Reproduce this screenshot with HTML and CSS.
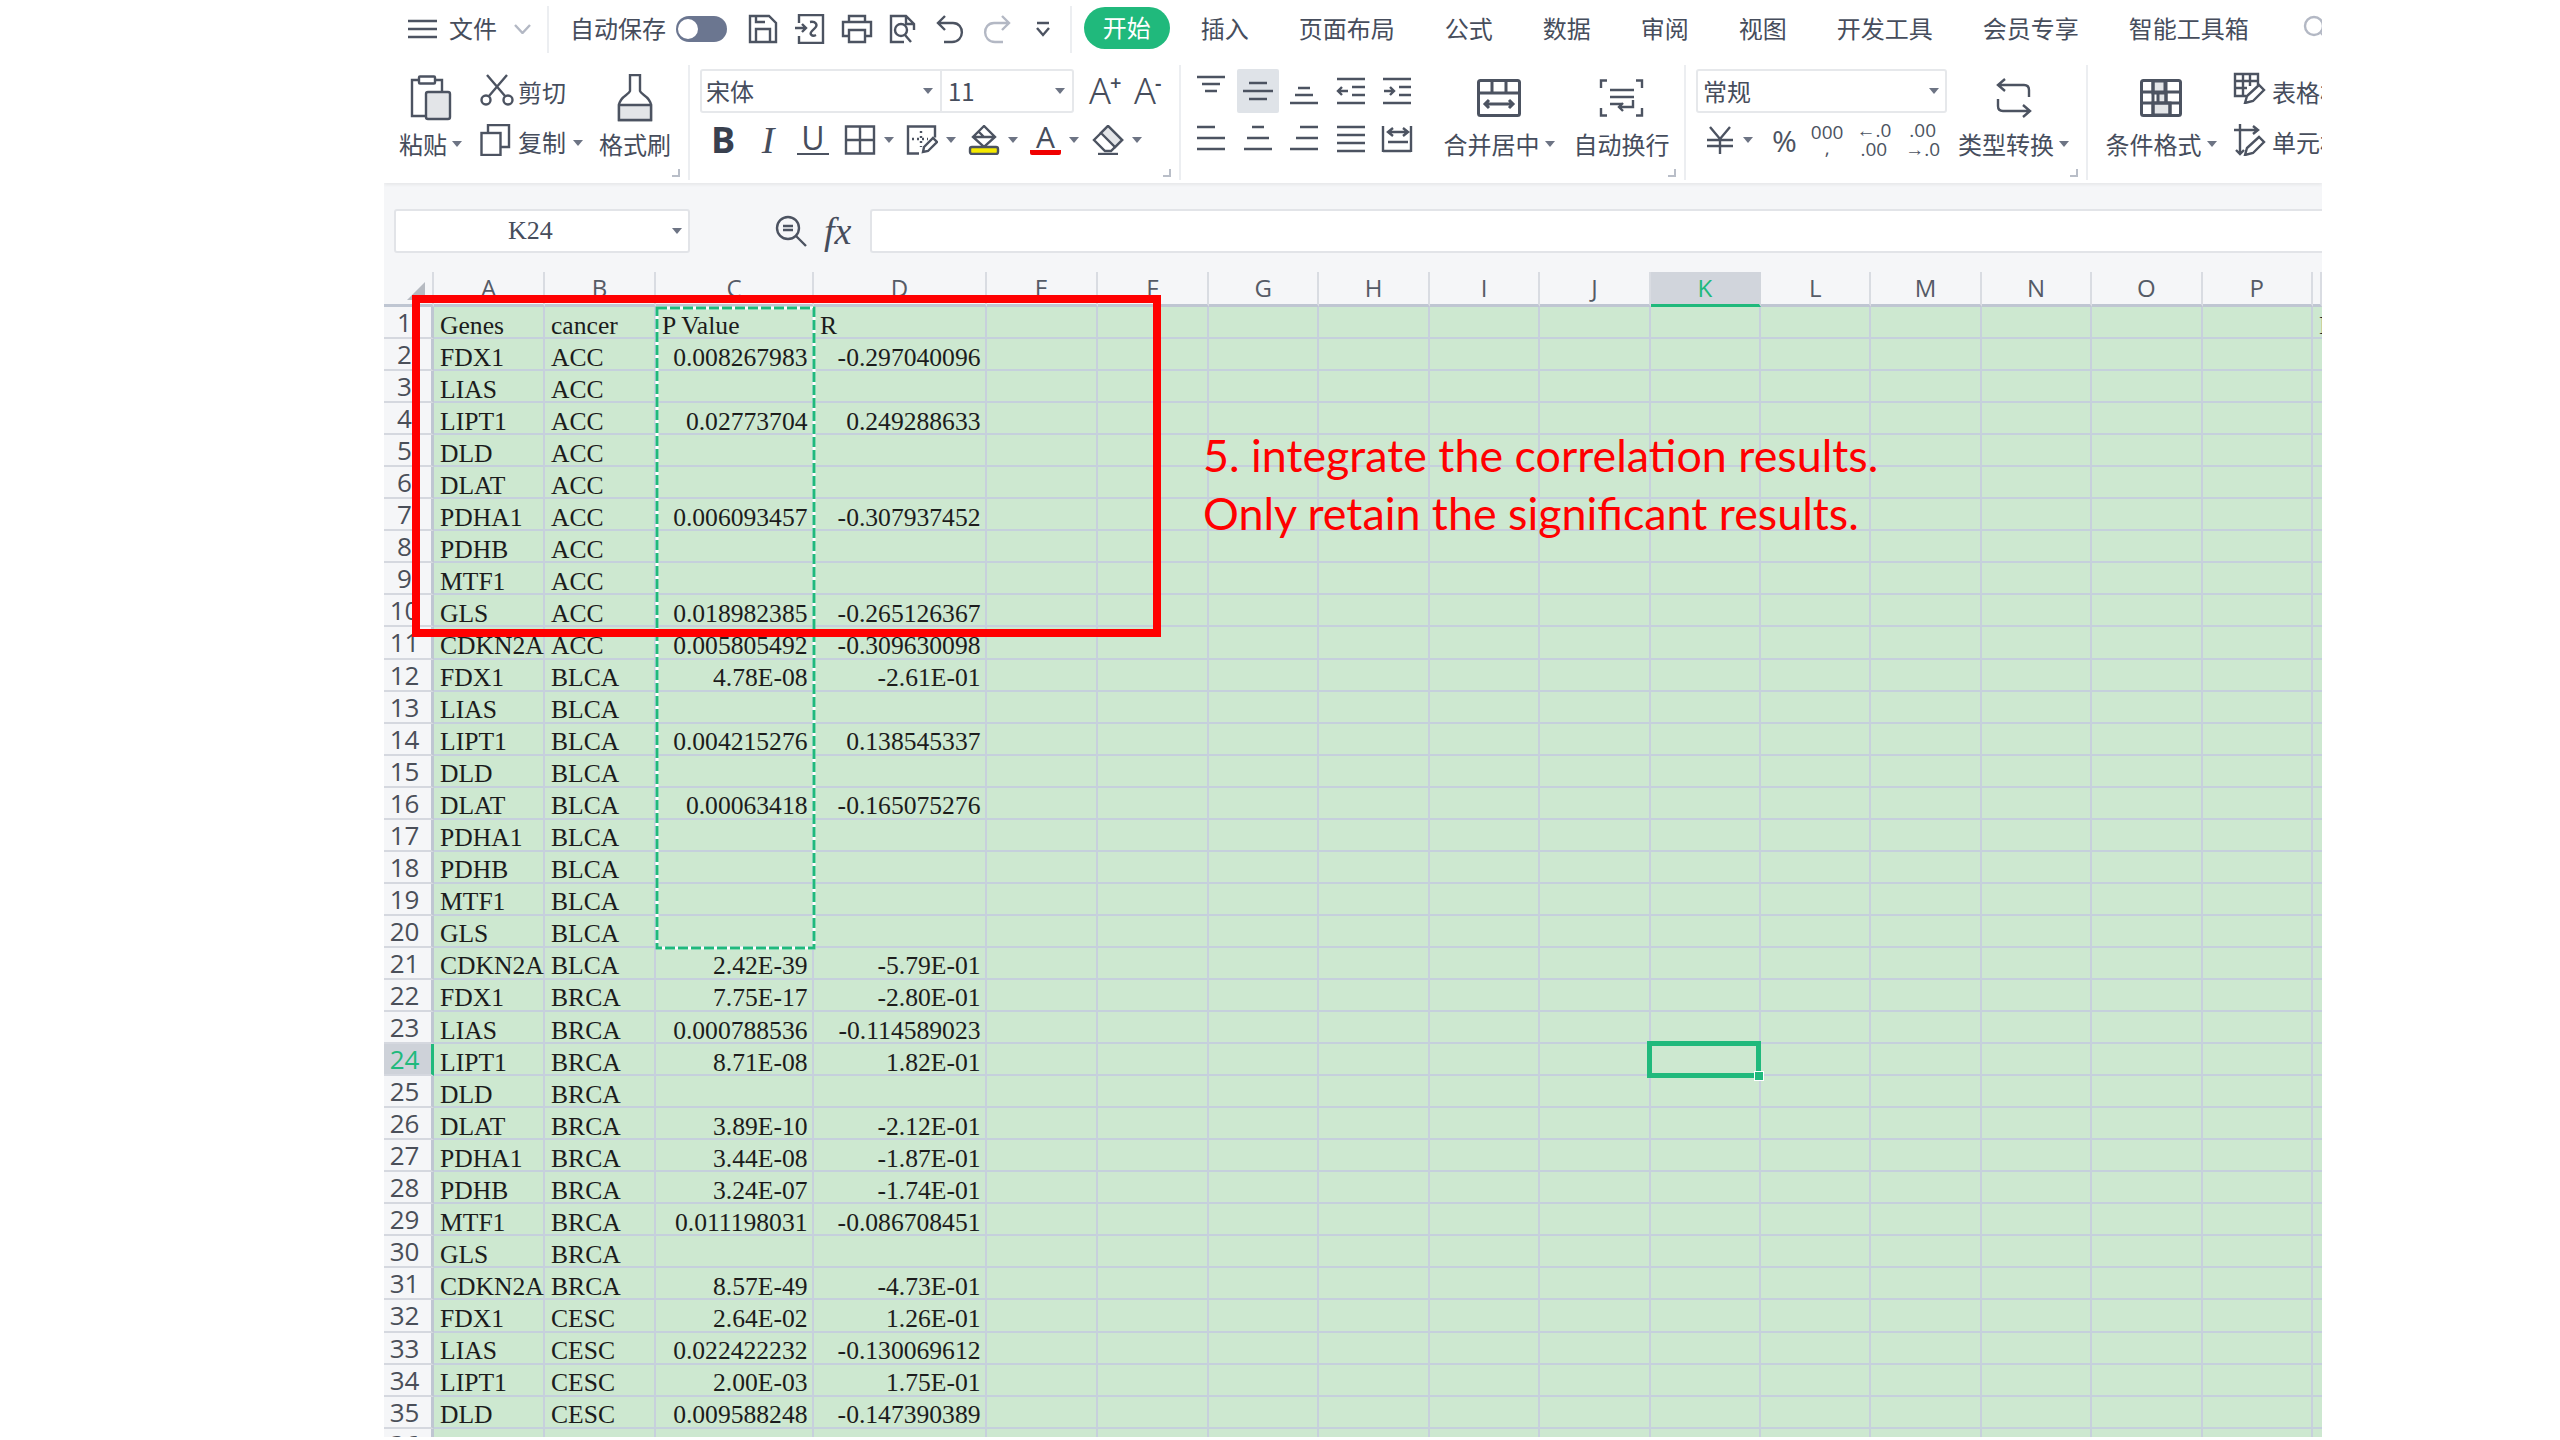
FILE: index.html
```html
<!DOCTYPE html>
<html lang="zh-CN">

<head>
    <meta charset="UTF-8">
    <title>WPS Spreadsheet</title>
    <link rel="stylesheet" href="styles.css">
</head>

<body>
    <div class="screen">
        <!-- title tabs -->
        <div class="tabs">
            <svg class="ic menu-ic" width="29" height="20" viewBox="0 0 29 20"><path d="M0 2h29M0 10h29M0 18h29"/></svg>
            <span class="tab-file">文件</span>
            <svg class="ic-light chev" width="17" height="10" viewBox="0 0 17 10"><path d="M1 1l7.500 8L16 1"/></svg>
            <i class="tab-sep sep-first"></i>
            <span class="autosave">自动保存</span>
            <span class="toggle"><b></b></span>
            <div class="quick">
                <svg class="ic" width="32" height="30" viewBox="0 0 32 30"><path d="M3 2h19l7 7v19H3zM9 28V15h14v13M9 2v6h9"/></svg>
                <svg class="ic" width="30" height="30" viewBox="0 0 30 30"><path d="M4 9V1h24v28H4v-7M0 14h11M7 10l4 4-4 4M15 8c6-1 8 3 5 6l-3 3c-3 3 0 6 4 4"/></svg>
                <svg class="ic" width="32" height="30" viewBox="0 0 32 30"><path d="M8 8V2h16v6M7 22H2V8h28v14h-5M8 16h16v12H8z"/></svg>
                <svg class="ic" width="30" height="30" viewBox="0 0 30 30"><path d="M16 28H3V2h15l8 8v6M18 2v8h8"/><circle cx="13" cy="16" r="6"/><path d="M17 21l6 7"/></svg>
                <svg class="ic" width="28" height="30" viewBox="0 0 28 30"><path d="M9 2L2 9l7 7M2 9h15c12 0 12 19-1 19H8"/></svg>
                <svg class="ic-light" width="28" height="30" viewBox="0 0 28 30"><path d="M19 2l7 7-7 7M26 9H11C-1 9-1 28 12 28h8"/></svg>
                <svg class="ic" width="16" height="16" viewBox="0 0 16 16"><path d="M2 2h12M2 7l6 7 6-7"/></svg>
            </div>
            <i class="tab-sep"></i>
            <span class="tab-active">开始</span>
            <div class="tab-list">
                <span>插入</span>
                <span>页面布局</span>
                <span>公式</span>
                <span>数据</span>
                <span>审阅</span>
                <span>视图</span>
                <span>开发工具</span>
                <span>会员专享</span>
                <span>智能工具箱</span>
            </div>
            <svg class="ic-light search" width="26" height="26" viewBox="0 0 26 26"><circle cx="11" cy="11" r="9"/><path d="M18 18l7 7"/></svg>
        </div>

        <!-- ribbon -->
        <div class="ribbon">
            <div class="group group-clip">
                <div class="big big-paste">
                    <div class="big-icon">
                        <svg class="ic" width="42" height="46" viewBox="0 0 42 46"><path d="M9 5H2v36h14M25 5h7v11"/><rect x="9" y="1.500" width="16" height="7" rx="1"/><rect x="16" y="17" width="24" height="27" rx="2" class="shade"/></svg>
                    </div>
                    <div class="big-label">粘贴<i class="arrow"></i></div>
                </div>
                <div class="stack stack-clip">
                    <div class="stack-row">
                        <svg class="ic row-ic" width="38" height="32" viewBox="0 0 38 32"><circle cx="6" cy="26" r="4.500"/><circle cx="28" cy="26" r="4.500"/><path d="M9 22L27 1M25 22L7 1"/></svg>
                        <span>剪切</span>
                    </div>
                    <div class="stack-row">
                        <svg class="ic row-ic" width="38" height="32" viewBox="0 0 38 32"><path d="M8 9V1h21v22h-8"/><rect x="1.500" y="9" width="19" height="22"/></svg>
                        <span>复制</span><i class="arrow"></i>
                    </div>
                </div>
                <div class="big big-brush">
                    <div class="big-icon">
                        <svg class="ic" width="36" height="48" viewBox="0 0 36 48"><path d="M13 1h10v16c1 4 10 5 11 14v15H2V31c1-9 10-10 11-14z"/><path d="M2 31h32v15H2z" class="shade"/></svg>
                    </div>
                    <div class="big-label">格式刷</div>
                </div>
                <i class="corner"></i>
            </div>

            <div class="group group-font">
                <div class="font-rows">
                    <div class="font-top">
                        <div class="combo combo-font">
                            <div class="combo-part part-name"><span>宋体</span><i class="arrow"></i></div>
                            <div class="combo-part part-size"><span>11</span><i class="arrow"></i></div>
                        </div>
                        <span class="size-btn size-up">A<sup>+</sup></span>
                        <span class="size-btn">A<sup>-</sup></span>
                    </div>
                    <div class="font-bottom">
                        <span class="fmt fmt-b">B</span>
                        <span class="fmt fmt-i">I</span>
                        <span class="fmt fmt-u">U</span>
                        <div class="drop drop-first">
                            <svg class="ic" width="32" height="30" viewBox="0 0 32 30"><path d="M2 1.500h28v27H2zM16 1.500v27M2 15h28"/></svg><i class="arrow"></i>
                        </div>
                        <div class="drop">
                            <svg class="ic" width="32" height="30" viewBox="0 0 32 30"><path d="M13 28.500H2v-27h27v11"/><path d="M15 6v16M6 14h16" stroke-dasharray="2 3"/><path d="M17 27l1-5 9-9 4 4-9 9z"/></svg><i class="arrow"></i>
                        </div>
                        <div class="drop">
                            <svg class="ic" width="32" height="30" viewBox="0 0 32 30"><path d="M16 1L5 12l11 10 11-10zM5 12h22M10 6l6 6"/><rect x="2" y="22" width="28" height="7" rx="2" class="fill-yellow"/></svg><i class="arrow"></i>
                        </div>
                        <div class="drop">
                            <span class="font-color">A</span><i class="arrow"></i>
                        </div>
                        <div class="drop">
                            <svg class="ic" width="32" height="30" viewBox="0 0 32 30"><path d="M16 1L2 15l11 11h6l11-11z"/><path d="M9 8l14 14 7-7-14-14z" class="shade"/><path d="M6 29h20"/></svg><i class="arrow"></i>
                        </div>
                    </div>
                </div>
                <i class="corner"></i>
            </div>

            <div class="group group-align">
                <div class="align-grid">
                    <div class="cell cell-top"><svg class="ic" width="30" height="20" viewBox="0 0 30 20"><path d="M1 2h28M6 9h18M9 16h12"/></svg></div>
                    <div class="cell cell-on"><svg class="ic" width="32" height="24" viewBox="0 0 32 24"><path d="M7 4h18M1 12h30M7 20h18"/></svg></div>
                    <div class="cell"><svg class="ic" width="30" height="28" viewBox="0 0 30 28"><path d="M9 11h12M6 18h18M1 26h28"/></svg></div>
                    <div class="cell"><svg class="ic" width="30" height="28" viewBox="0 0 30 28"><path d="M1 2h28M1 26h28M16 10h13M16 18h13M12 14H2M6 10l-4 4 4 4"/></svg></div>
                    <div class="cell"><svg class="ic" width="30" height="28" viewBox="0 0 30 28"><path d="M1 2h28M1 26h28M17 10h12M17 18h12M2 14h10M8 10l4 4-4 4"/></svg></div>
                    <div class="cell"><svg class="ic" width="30" height="28" viewBox="0 0 30 28"><path d="M1 2h18M1 13h28M1 24h28"/></svg></div>
                    <div class="cell"><svg class="ic" width="30" height="28" viewBox="0 0 30 28"><path d="M9 2h12M4 13h22M1 24h28"/></svg></div>
                    <div class="cell"><svg class="ic" width="30" height="28" viewBox="0 0 30 28"><path d="M11 2h18M7 13h22M1 24h28"/></svg></div>
                    <div class="cell"><svg class="ic" width="30" height="28" viewBox="0 0 30 28"><path d="M1 2h28M1 10h28M1 18h28M1 26h28"/></svg></div>
                    <div class="cell"><svg class="ic" width="32" height="28" viewBox="0 0 32 28"><path d="M2 1v26M30 1v26M2 26h28M7 17h20M7 7h20M12 3l-5 4 5 4M22 3l5 4-5 4"/></svg></div>
                </div>
                <div class="big big-merge">
                    <div class="big-icon">
                        <svg class="ic ic-heavy" width="44" height="38" viewBox="0 0 44 38"><rect x="1.500" y="1.500" width="41" height="35" rx="2"/><path d="M1.500 14h41M15 1.500V14M29 1.500V14M8 25h28M12 21l-4 4 4 4M32 21l4 4-4 4"/></svg>
                    </div>
                    <div class="big-label">合并居中<i class="arrow"></i></div>
                </div>
                <div class="big big-wrap">
                    <div class="big-icon">
                        <svg class="ic" width="45" height="38" viewBox="0 0 45 38"><path d="M8 1.500H2V9M37 1.500h6V9M2 29v7.500h6M43 29v7.500h-6M11 11h24M11 18h24M11 25h12M34 21v7H20M24 24l-4 4 4 4"/></svg>
                    </div>
                    <div class="big-label">自动换行</div>
                </div>
                <i class="corner"></i>
            </div>

            <div class="group group-number">
                <div class="font-rows">
                    <div class="combo combo-number">
                        <div class="combo-part part-format"><span>常规</span><i class="arrow"></i></div>
                    </div>
                    <div class="num-bottom">
                        <svg class="ic num-yen" width="28" height="28" viewBox="0 0 28 28"><path d="M4 1l10 12L24 1M1 14h26M1 20h26M14 13v15"/></svg>
                        <i class="arrow arrow-yen"></i>
                        <span class="num-pct">%</span>
                        <span class="num-stack num-thou">000<br>,</span>
                        <span class="num-stack num-dec">←.0<br>.00</span>
                        <span class="num-stack num-inc">.00<br>→.0</span>
                    </div>
                </div>
                <div class="big big-convert">
                    <div class="big-icon">
                        <svg class="ic" width="36" height="42" viewBox="0 0 36 42"><path d="M9 2L2 8l7 6M2 8h26c4 0 5 2 5 5v7M2 22v7c0 3 1 5 5 5h27M27 28l7 6-7 6"/></svg>
                    </div>
                    <div class="big-label">类型转换<i class="arrow"></i></div>
                </div>
                <i class="corner"></i>
            </div>

            <div class="group group-style">
                <div class="big big-cond">
                    <div class="big-icon">
                        <svg class="ic ic-heavy" width="42" height="38" viewBox="0 0 42 38"><path d="M13 2h12v12H13zM18 14h8v10h-8zM13 24h17v12H13z" class="shade"/><rect x="1.500" y="1.500" width="39" height="35" rx="2"/><path d="M1.500 13h39M1.500 24h39M13 1.500v35M26 1.500V24M30 24v12.500"/></svg>
                    </div>
                    <div class="big-label">条件格式<i class="arrow"></i></div>
                </div>
                <div class="stack stack-style">
                    <div class="stack-row">
                        <svg class="ic row-ic" width="39" height="32" viewBox="0 0 39 32"><path d="M13 24H2V2h23v11M2 9h23M2 16h12M10 2v22M17 2v12"/><path d="M12 31l2-7 12-11 5 5-11 11z"/></svg>
                        <span>表格样式</span>
                    </div>
                    <div class="stack-row">
                        <svg class="ic row-ic" width="39" height="32" viewBox="0 0 39 32"><path d="M7 0v30M3 26l4 4 4-4M1 6h24M20 2l5 4-5 4"/><path d="M12 31l2-7 12-11 5 5-11 11z"/></svg>
                        <span>单元格样式</span>
                    </div>
                </div>
            </div>
        </div>

        <!-- name box and formula input -->
        <div class="formula-bar">
            <div class="name-box"><span>K24</span><i class="arrow"></i></div>
            <svg class="ic formula-zoom" width="32" height="32" viewBox="0 0 32 32"><circle cx="13" cy="13" r="11"/><path d="M21 21l10 10M8 11h10M8 15h10"/></svg>
            <span class="fx">fx</span>
            <div class="formula-input"></div>
        </div>

        <!-- cells are added by sheet.js -->
        <div class="sheet" id="sheet">
            <div class="grid" id="grid"></div>

            <svg class="ants" width="164" height="646" viewBox="0 0 164 646">
                <rect class="ants-base" x="3" y="3" width="157" height="640"/>
                <rect class="ants-dash" x="3" y="3" width="157" height="640"/>
            </svg>

            <div class="selected"><i class="handle"></i></div>
            <div class="redbox"></div>
            <div class="note">5. integrate the correlation results.<br>Only retain the significant results.</div>
        </div>
    </div>

    <script src="sheet.js"></script>
</body>

</html>
```

FILE: styles.css
```css
body {
    margin: 0;
    background-color: #fff;
    font-family: "Noto Sans CJK SC", "Noto Sans", sans-serif;
    color: #464d5c;
}

.screen {
    position: relative;
    width: 1938px;
    height: 1437px;
    margin-left: 384px;
    overflow: hidden;
    font-size: 24px;
}

/* icons */
.ic,
.ic-light {
    flex: none;
    fill: none;
    stroke: #4c5361;
    stroke-width: 2.4;
}

.ic-heavy {
    stroke-width: 3;
}

.ic-light {
    stroke: #b3b8c4;
}

.shade {
    fill: #e3e5e8;
}

.fill-yellow {
    fill: #f5e900;
}

.arrow {
    display: inline-block;
    flex: none;
    width: 0;
    height: 0;
    border-left: 5px solid transparent;
    border-right: 5px solid transparent;
    border-top: 6px solid #6d7484;
}

/* tabs */
.tabs {
    display: flex;
    align-items: center;
    height: 58px;
    padding-left: 24px;
    white-space: nowrap;
}

.tabs > * {
    flex: none;
}

.tab-file {
    margin-top: -3px;
    margin-left: 12px;
}

.chev {
    margin-left: 17px;
}

.tab-sep {
    width: 2px;
    height: 47px;
    margin-left: 16px;
    background-color: #eceef1;
}

.autosave {
    margin-top: -3px;
    margin-left: 21px;
}

.toggle {
    display: flex;
    align-items: center;
    width: 51px;
    height: 26px;
    margin-left: 10px;
    padding-left: 2px;
    box-sizing: border-box;
    border-radius: 13px;
    background-color: #6b7690;
}

.toggle b {
    width: 20px;
    height: 20px;
    border-radius: 50%;
    background-color: #fff;
}

.quick {
    display: grid;
    grid-template-columns: repeat(7, 46.7px);
    align-items: center;
    justify-items: center;
    margin-left: 13px;
}

.quick + .tab-sep {
    margin-left: 3px;
}

.tab-active {
    box-sizing: border-box;
    width: 86px;
    height: 42px;
    margin-top: -2px;
    margin-left: 12px;
    padding-bottom: 3px;
    line-height: 39px;
    text-align: center;
    border-radius: 21px;
    background-color: #20b97c;
    color: #fff;
}

.tab-list {
    display: flex;
    gap: 50px;
    margin-top: -3px;
    margin-left: 31px;
}

.search {
    margin-left: 54px;
    margin-top: -3px;
}

/* ribbon */
.ribbon {
    display: flex;
    height: 125px;
    box-shadow: 0 2px 3px rgba(0, 0, 0, 0.06);
    position: relative;
}

.group {
    position: relative;
    display: flex;
    flex: none;
    box-sizing: border-box;
    height: 115px;
    margin-top: 7px;
    border-right: 2px solid #eceef1;
}

.group-clip {
    width: 306px;
    padding-left: 15px;
}

.group-font {
    width: 491px;
    padding-left: 10px;
}

.group-align {
    width: 505px;
    padding-left: 7px;
}

.group-number {
    width: 402px;
    padding-left: 10px;
}

.group-style {
    width: 300px;
    padding-left: 18px;
    border-right: none;
}

.corner {
    position: absolute;
    right: 8px;
    bottom: 3px;
    width: 6px;
    height: 6px;
    border-right: 2px solid #b9bec8;
    border-bottom: 2px solid #b9bec8;
}

.big {
    display: flex;
    flex: none;
    flex-direction: column;
    align-items: center;
    padding-top: 9px;
}

.big-icon {
    display: flex;
    align-items: center;
    height: 48px;
}

.big-label {
    display: flex;
    align-items: center;
    gap: 5px;
    height: 43px;
    white-space: nowrap;
}

.big-paste {
    width: 63px;
}

.big-brush {
    width: 72px;
    margin-left: 17px;
}

.big-merge {
    width: 109px;
    margin-left: 24px;
}

.big-wrap {
    width: 96px;
    margin-left: 20px;
}

.big-convert {
    width: 109px;
    margin-left: 12px;
}

.big-cond {
    width: 110px;
}

.stack {
    display: flex;
    flex: none;
    flex-direction: column;
    gap: 8px;
    padding-top: 4px;
}

.stack-clip {
    width: 102px;
    margin-left: 18px;
}

.stack-style {
    margin-left: 17px;
}

.stack-row {
    display: flex;
    align-items: center;
    height: 44px;
    white-space: nowrap;
}

.row-ic {
    margin-top: -6px;
}

.stack-clip .stack-row:first-child .row-ic {
    margin-top: -2px;
}

.stack-row + .stack-row span {
    margin-top: -3px;
}

.stack-row .arrow {
    margin-left: 7px;
}

/* font group */
.font-rows {
    display: flex;
    flex: none;
    flex-direction: column;
    gap: 12px;
    padding-top: 4px;
}

.font-top {
    display: flex;
    align-items: center;
}

.combo {
    display: flex;
    box-sizing: border-box;
    height: 44px;
    border: 2px solid #e6e8eb;
    border-radius: 3px;
    background-color: #fff;
}

.combo-font {
    width: 374px;
}

.combo-number {
    width: 251px;
}

.combo-part {
    display: flex;
    align-items: center;
    justify-content: space-between;
    box-sizing: border-box;
    padding: 0 7px 0 4px;
    line-height: 40px;
}

.part-name {
    width: 240px;
    border-right: 2px solid #e6e8eb;
}

.part-size {
    flex: 1;
    padding-left: 6px;
}

.part-format {
    flex: 1;
    padding-left: 5px;
    padding-right: 6px;
}

.size-btn {
    width: 32px;
    margin-left: 13px;
    font-family: "Noto Sans", sans-serif;
    font-size: 36px;
    font-weight: 300;
    line-height: 40px;
    white-space: nowrap;
}

.size-up {
    margin-left: 15px;
}

.size-btn sup {
    margin-left: -1px;
    font-size: 20px;
    font-weight: 600;
    line-height: 0;
    vertical-align: 14px;
}

.font-bottom {
    display: flex;
    align-items: center;
    gap: 13px;
    height: 30px;
    padding-left: 7px;
}

.fmt {
    width: 32px;
    text-align: center;
    line-height: 30px;
}

.fmt-b {
    font-family: "Open Sans", sans-serif;
    font-size: 36px;
    font-weight: 700;
    color: #39404e;
}

.fmt-i {
    font-family: "Liberation Serif", serif;
    font-size: 38px;
    font-style: italic;
}

.fmt-u {
    box-sizing: border-box;
    height: 30px;
    font-family: "Open Sans", sans-serif;
    font-size: 32px;
    line-height: 26px;
    border-bottom: 2px solid #4c5361;
}

.drop {
    display: flex;
    align-items: center;
    gap: 8px;
    width: 49px;
}

.drop-first {
    margin-left: 2px;
}

.font-color {
    box-sizing: border-box;
    width: 32px;
    height: 30px;
    font-family: "Open Sans", sans-serif;
    font-size: 30px;
    line-height: 24px;
    text-align: center;
    border-bottom: 5px solid #f00000;
    border-radius: 2px;
}

/* align group */
.align-grid {
    display: grid;
    flex: none;
    grid-template-columns: repeat(5, 46.5px);
    grid-template-rows: 44px 28px;
    row-gap: 12px;
    padding-top: 4px;
}

.cell {
    display: flex;
    align-items: center;
    justify-content: center;
}

.cell-top {
    align-items: flex-start;
    padding-top: 6px;
}

.cell-on {
    margin: 0 2px;
    border-radius: 2px;
    background-color: #dfe3e8;
}

/* number group */
.num-bottom {
    display: flex;
    align-items: center;
    height: 30px;
    padding-left: 10px;
    color: #4c5361;
}

.arrow-yen {
    margin-left: 9px;
}

.num-pct {
    margin-left: 19px;
    font-family: "Open Sans", sans-serif;
    font-size: 30px;
}

.num-stack {
    font-family: "Open Sans", sans-serif;
    font-size: 19px;
    line-height: 19px;
    text-align: center;
    white-space: nowrap;
}

.num-thou {
    margin-left: 14px;
    line-height: 16px;
}

.num-dec {
    margin-left: 13px;
}

.num-inc {
    margin-left: 14px;
}

/* formula bar */
.formula-bar {
    display: flex;
    align-items: center;
    box-sizing: border-box;
    height: 89px;
    padding: 26px 0 19px 10px;
    background-color: #f5f6f8;
}

.name-box {
    display: flex;
    align-items: center;
    box-sizing: border-box;
    width: 296px;
    height: 44px;
    padding: 0 6px 0 112px;
    justify-content: space-between;
    font-family: "Liberation Serif", serif;
    font-size: 26px;
    border: 2px solid #e2e4e8;
    border-radius: 3px;
    background-color: #fff;
}

.formula-zoom {
    margin-left: 85px;
}

.fx {
    width: 46px;
    margin-left: 17px;
    font-family: "Liberation Serif", serif;
    font-size: 38px;
    font-style: italic;
    line-height: 44px;
}

.formula-input {
    flex: 1;
    height: 44px;
    box-sizing: border-box;
    border: 2px solid #e2e4e8;
    border-right: none;
    border-radius: 3px 0 0 3px;
    background-color: #fff;
}

/* sheet */
.sheet {
    position: relative;
    height: 1165px;
    overflow: hidden;
    background-color: #f5f6f8;
}

.grid {
    display: grid;
    grid-template-columns: 50px 111px 111px 158px 173px 111px 111px repeat(10, 110.4px) 9px;
    grid-template-rows: 35px repeat(36, 32.05px);
}

.col-head,
.row-head,
.data {
    box-sizing: border-box;
    white-space: nowrap;
}

.col-head {
    font-family: "Open Sans", sans-serif;
    font-size: 24px;
    line-height: 32px;
    text-align: center;
    color: #555b66;
    border-right: 2px solid #d9dce2;
    border-bottom: 3px solid #bfc6d2;
}

.col-head.on {
    color: #20b97c;
    background-color: #d1d5dc;
    border-bottom-color: #20b97c;
    border-right-color: #d1d5dc;
}

.row-head {
    padding-right: 6px;
    font-family: "Open Sans", sans-serif;
    font-size: 26px;
    line-height: 30px;
    text-align: center;
    color: #4a4f59;
    border-right: 3px solid #bfc6d2;
    border-bottom: 2px solid #d5d8df;
}

.row-head.on {
    color: #20b97c;
    background-color: #ced2d9;
    border-right-color: #20b97c;
}

.corner-head {
    position: relative;
    border-right: 2px solid #d9dce2;
    border-bottom: 3px solid #bfc6d2;
}

.corner-head::after {
    content: "";
    position: absolute;
    right: 7px;
    bottom: 4px;
    border-left: 18px solid transparent;
    border-bottom: 18px solid #b6bac1;
}

.data {
    padding: 6.5px 6px 0;
    font-family: "Liberation Serif", serif;
    font-size: 25.6px;
    line-height: 23.5px;
    color: #1c1c1c;
    background-color: #cde8d0;
    border-right: 2px solid #c7d0dc;
    border-bottom: 2px solid #c5d0dc;
}

.data.num {
    padding-right: 4.5px;
    text-align: right;
}

/* things lying over the cells */
.ants {
    position: absolute;
    left: 270px;
    top: 33px;
    fill: none;
}

.ants-base {
    stroke: #fff;
    stroke-width: 3;
}

.ants-dash {
    stroke: #20b97c;
    stroke-width: 3;
    stroke-dasharray: 10 3;
}

.selected {
    position: absolute;
    left: 1263px;
    top: 769px;
    box-sizing: border-box;
    width: 114px;
    height: 37px;
    border: 5px solid #20b97c;
}

.handle {
    position: absolute;
    right: -8px;
    bottom: -8px;
    width: 8px;
    height: 8px;
    border: 1px solid #fff;
    background-color: #20b97c;
}

.redbox {
    position: absolute;
    left: 28px;
    top: 23px;
    box-sizing: border-box;
    width: 749px;
    height: 342px;
    border: 8px solid #ff0000;
}

.note {
    position: absolute;
    left: 819px;
    top: 154px;
    font-family: Lato, sans-serif;
    font-size: 44.8px;
    line-height: 58px;
    white-space: nowrap;
    color: #ff0000;
}
```

FILE: sheet.js
```js
const columns = ['A', 'B', 'C', 'D', 'E', 'F', 'G', 'H', 'I', 'J', 'K', 'L', 'M', 'N', 'O', 'P', 'Q'];
const selectedColumn = 'K';
const selectedRow = 24;

const rows = [
    ['Genes', 'cancer', 'P Value', 'R'],
    ['FDX1', 'ACC', '0.008267983', '-0.297040096'],
    ['LIAS', 'ACC'],
    ['LIPT1', 'ACC', '0.02773704', '0.249288633'],
    ['DLD', 'ACC'],
    ['DLAT', 'ACC'],
    ['PDHA1', 'ACC', '0.006093457', '-0.307937452'],
    ['PDHB', 'ACC'],
    ['MTF1', 'ACC'],
    ['GLS', 'ACC', '0.018982385', '-0.265126367'],
    ['CDKN2A', 'ACC', '0.005805492', '-0.309630098'],
    ['FDX1', 'BLCA', '4.78E-08', '-2.61E-01'],
    ['LIAS', 'BLCA'],
    ['LIPT1', 'BLCA', '0.004215276', '0.138545337'],
    ['DLD', 'BLCA'],
    ['DLAT', 'BLCA', '0.00063418', '-0.165075276'],
    ['PDHA1', 'BLCA'],
    ['PDHB', 'BLCA'],
    ['MTF1', 'BLCA'],
    ['GLS', 'BLCA'],
    ['CDKN2A', 'BLCA', '2.42E-39', '-5.79E-01'],
    ['FDX1', 'BRCA', '7.75E-17', '-2.80E-01'],
    ['LIAS', 'BRCA', '0.000788536', '-0.114589023'],
    ['LIPT1', 'BRCA', '8.71E-08', '1.82E-01'],
    ['DLD', 'BRCA'],
    ['DLAT', 'BRCA', '3.89E-10', '-2.12E-01'],
    ['PDHA1', 'BRCA', '3.44E-08', '-1.87E-01'],
    ['PDHB', 'BRCA', '3.24E-07', '-1.74E-01'],
    ['MTF1', 'BRCA', '0.011198031', '-0.086708451'],
    ['GLS', 'BRCA'],
    ['CDKN2A', 'BRCA', '8.57E-49', '-4.73E-01'],
    ['FDX1', 'CESC', '2.64E-02', '1.26E-01'],
    ['LIAS', 'CESC', '0.022422232', '-0.130069612'],
    ['LIPT1', 'CESC', '2.00E-03', '1.75E-01'],
    ['DLD', 'CESC', '0.009588248', '-0.147390389'],
    []
];

const grid = document.getElementById('grid');

function addCell(className, text) {
    const div = document.createElement('div');
    div.className = className;
    div.textContent = text;
    grid.appendChild(div);
}

function renderHeader() {
    addCell('corner-head', '');
    columns.forEach(name => {
        const on = name === selectedColumn ? ' on' : '';
        addCell('col-head' + on, name === 'Q' ? '' : name);
    });
}

function renderRows() {
    rows.forEach((row, index) => {
        const number = index + 1;
        addCell('row-head' + (number === selectedRow ? ' on' : ''), number);
        columns.forEach((name, col) => {
            let text = row[col] || '';
            if (name === 'Q' && number === 1) {
                text = 'I'; // cut off at the window edge
            }
            const isNumber = number > 1 && (col === 2 || col === 3);
            addCell('data' + (isNumber ? ' num' : ''), text);
        });
    });
}

renderHeader();
renderRows();
```
